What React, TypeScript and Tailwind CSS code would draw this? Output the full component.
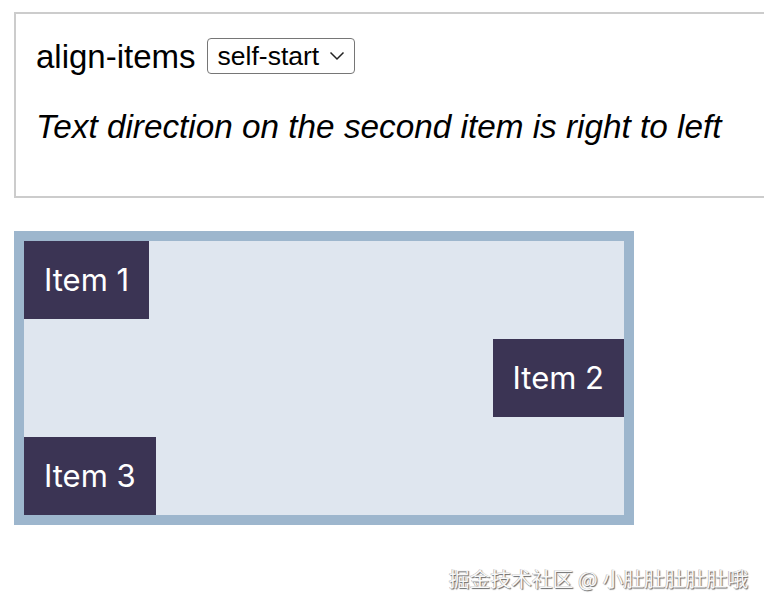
import React from "react";

export default function App() {
  return (
    <div className="relative w-[764px] h-[608px] overflow-hidden bg-white" style={{ fontFamily: '"Liberation Sans", Arial, sans-serif' }}>
      <div className="ml-[14px] mt-[12px] w-[780px] h-[186px] border-2 border-[#cccccc] pl-[20px] pt-[24px]">
        <div className="flex items-center h-[36px] text-[33px] text-black leading-none">
          <span>align-items</span>
          <div className="ml-[11px] flex items-center h-[36px] pl-[10px] pr-[9px] border border-[#767676] rounded-[4px] text-[26.5px]">
            <span>self-start</span>
            <svg className="ml-[10px]" width="16" height="10" viewBox="0 0 16 10" fill="none">
              <path d="M1.5 1.5 L8 8 L14.5 1.5" stroke="#222" strokeWidth="1.5" />
            </svg>
          </div>
        </div>
        <p className="mt-[36px] text-[33.3px] italic leading-none text-black">
          Text direction on the second item is right to left
        </p>
      </div>
      <div className="ml-[14px] mt-[33px] w-[620px] border-[10px] border-[#9db6cd] bg-[#dfe6ef] flex flex-col items-start gap-[20px]" style={{ fontFamily: 'Inter, "Liberation Sans", sans-serif' }}>
        <div className="bg-[#3b3454] text-white text-[31px] leading-[38px] px-[20px] py-[20px]">Item 1</div>
        <div dir="rtl" className="self-end bg-[#3b3454] text-white text-[31px] leading-[38px] px-[20px] py-[20px]">Item 2</div>
        <div className="bg-[#3b3454] text-white text-[31px] leading-[38px] px-[20px] py-[20px]">Item 3</div>
      </div>
      <div className="absolute right-[16px] top-[565px] text-[20.8px] leading-[26px] text-[#f8f8f8]" style={{ fontFamily: '"Noto Sans CJK SC", sans-serif', textShadow: '1px 1px 1px #666, -0.5px -0.5px 0 #aaa' }}>
        掘金技术社区 @ 小肚肚肚肚肚哦
      </div>
    </div>
  );
}
